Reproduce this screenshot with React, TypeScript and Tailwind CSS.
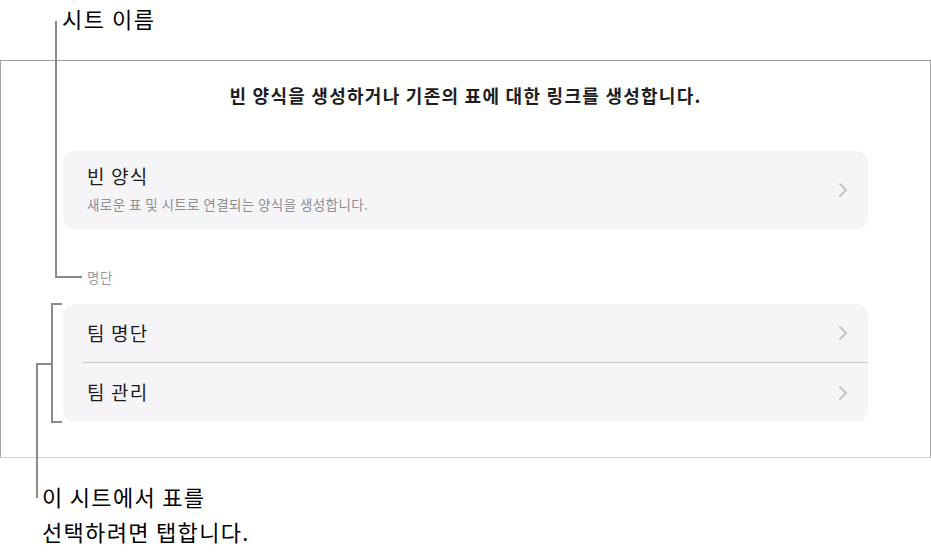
import React from "react";

const font = { fontFamily: '"Noto Sans CJK KR", "Noto Sans", sans-serif' };

function Chevron() {
  return (
    <svg width="10" height="16" viewBox="0 0 10 16" className="shrink-0">
      <path d="M2 2 L8 8 L2 14" fill="none" stroke="#c4c4c8" strokeWidth="2" strokeLinecap="round" strokeLinejoin="round" />
    </svg>
  );
}

function Row({ title, divider }: { title: string; divider?: boolean }) {
  return (
    <div className="flex h-[59px] items-center pl-[20px]">
      <div className={`flex h-full flex-1 items-center pr-[20px] ${divider ? "border-b border-[#c8c8cc]" : ""}`}>
        <span className="flex-1 pl-[4px] text-[19px] tracking-[0.06em] text-[#1d1d1f]">{title}</span>
        <Chevron />
      </div>
    </div>
  );
}

export default function App() {
  return (
    <div className="relative h-[556px] w-[931px] overflow-hidden bg-white" style={font}>
      <div className="h-[60px] pl-[62px] pt-[2px] text-[22px] leading-[32px] tracking-[0.07em] text-black">시트 이름</div>

      <div className="flex h-[398px] flex-col border border-b-[#d2d2d2] border-l-[#a6a6a6] border-r-[#a6a6a6] border-t-[#a0a0a0] px-[62px]">
        <div className="pt-[21px] text-center text-[18px] font-bold leading-[26px] tracking-[0.07em] text-[#1d1d1f]">
          빈 양식을 생성하거나 기존의 표에 대한 링크를 생성합니다.
        </div>

        <div className="mt-[43px] flex h-[78px] items-center rounded-[12px] bg-[#f5f5f7] pl-[24px] pr-[20px]">
          <div className="flex-1 self-start pt-[13px]">
            <div className="text-[19px] leading-[24px] tracking-[0.06em] text-[#1d1d1f]">빈 양식</div>
            <div className="mt-[7px] text-[13.5px] leading-[19px] tracking-[0.03em] text-[#8e8e93]">새로운 표 및 시트로 연결되는 양식을 생성합니다.</div>
          </div>
          <Chevron />
        </div>

        <div className="mt-[39px] pl-[24px] text-[13.5px] leading-[19px] tracking-[0.04em] text-[#9a9a9e]">명단</div>

        <div className="mt-[17px] flex flex-col rounded-[12px] bg-[#f5f5f7]">
          <Row title="팀 명단" divider />
          <Row title="팀 관리" />
        </div>
      </div>

      <div className="pl-[42px] pt-[21px] text-[22px] leading-[35px] tracking-[0.06em] text-black">
        이 시트에서 표를
        <br />
        선택하려면 탭합니다.
      </div>

      {/* callout lines */}
      <div className="absolute left-[55px] top-[21px] h-[256px] w-[2px] bg-[#8a8a8a]" />
      <div className="absolute left-[55px] top-[276px] h-[2px] w-[27px] bg-[#8a8a8a]" />

      <div className="absolute left-[51px] top-[303px] h-[120px] w-[2px] bg-[#8a8a8a]" />
      <div className="absolute left-[51px] top-[303px] h-[2px] w-[11px] bg-[#8a8a8a]" />
      <div className="absolute left-[51px] top-[421px] h-[2px] w-[11px] bg-[#8a8a8a]" />
      <div className="absolute left-[36px] top-[363px] h-[2px] w-[17px] bg-[#8a8a8a]" />
      <div className="absolute left-[36px] top-[363px] h-[135px] w-[2px] bg-[#8a8a8a]" />
    </div>
  );
}
